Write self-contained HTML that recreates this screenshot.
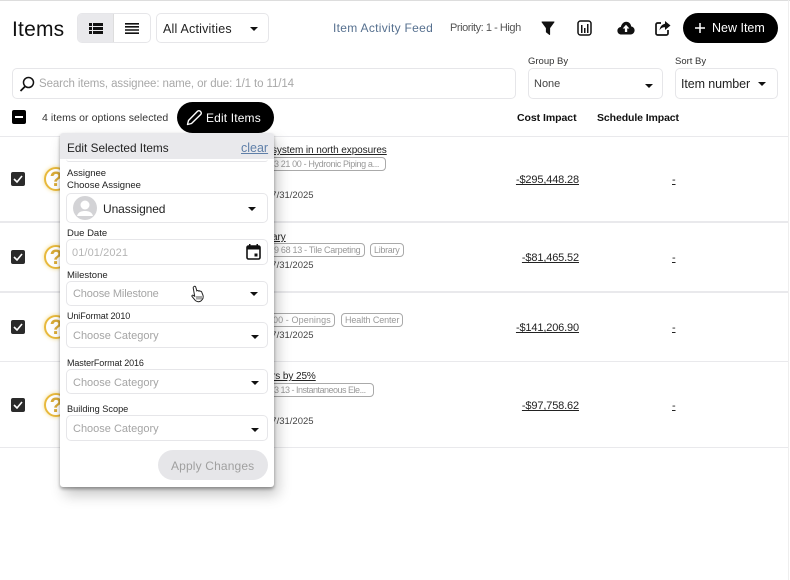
<!DOCTYPE html>
<html><head><meta charset="utf-8">
<style>
html,body{margin:0;padding:0;background:#fff}
#p{position:relative;width:790px;height:580px;overflow:hidden;background:#fff;font-family:"Liberation Sans",sans-serif;color:#111;filter:blur(.25px)}
#p div,#p span.t,#p svg{position:absolute}
.t{position:absolute;white-space:nowrap;line-height:1}
.box{border:1px solid #e6e6e9;border-radius:5px;background:#fff;box-sizing:border-box}
.line{left:0;width:788px;background:#e9e9ec;height:1px}
.cb{left:11px;width:14px;height:14px;background:#2b2b2b;border-radius:2px}
.q{left:44px;width:20px;height:20px;border:2.5px solid #e8b93c;border-radius:50%;box-shadow:0 0 4px #f3dc8e;color:#d9ab38;font-size:21px;font-weight:bold;text-align:center;line-height:21px}
.tag{border:1px solid #aaa;border-radius:4px;height:14px;box-sizing:border-box;background:#fff}
.gr{color:#999;font-size:9px;letter-spacing:-.3px}
.ttl{font-size:10px;text-decoration:underline;color:#222;letter-spacing:-.08px}
.dt{font-size:9.5px;color:#444}
.amt{font-size:11px;text-decoration:underline;letter-spacing:-.15px;color:#222}
.lab{font-size:9.5px;color:#222}
.ph{font-size:11px;color:#a5a5a5}
.arr{width:0;height:0;border-left:4px solid transparent;border-right:4px solid transparent;border-top:4px solid #111}
.fld{left:66px;width:202px;border:1px solid #e6e6e9;border-radius:5px;box-sizing:border-box;background:#fff}
</style></head><body><div id="p">
<div style="left:0;top:0;width:790px;height:1px;background:#ddd"></div>
<div style="left:788px;top:0;width:1px;height:580px;background:#eee"></div>

<span class="t" style="left:12px;top:19px;font-size:21px;letter-spacing:.2px">Items</span>
<div class="box" style="left:77px;top:13px;width:74px;height:30px"></div>
<div style="left:78px;top:14px;width:35px;height:28px;background:#e9e9ec;border-radius:4px 0 0 4px;border-right:1px solid #ddd"></div>
<svg style="left:89px;top:23px" width="14" height="11" viewBox="0 0 14 11"><path d="M0 0h3v3H0zM4 0h10v3H4zM0 4h3v3H0zM4 4h10v3H4zM0 8h3v3H0zM4 8h10v3H4z" fill="#111"/></svg>
<svg style="left:125px;top:23px" width="14" height="11" viewBox="0 0 14 11"><path d="M0 0h14v1.6H0zM0 3h14v1.6H0zM0 6.2h14v1.6H0zM0 9.4h14V11H0z" fill="#111"/></svg>
<div class="box" style="left:156px;top:13px;width:113px;height:30px"></div>
<span class="t" style="left:163px;top:23px;font-size:12.5px;color:#222;letter-spacing:.2px">All Activities</span>
<div class="arr" style="left:250px;top:27px"></div>

<span class="t" style="left:333px;top:22px;font-size:12px;color:#56708f;letter-spacing:.3px">Item Activity Feed</span>
<span class="t" style="left:450px;top:23px;font-size:11px;color:#555;letter-spacing:-.45px">Priority: 1 - High</span>
<svg style="left:541px;top:21px" width="14" height="14" viewBox="0 0 14 14"><path d="M1 1h12L8.6 7v6.5L5.4 11V7z" fill="#111" stroke="#111" stroke-linejoin="round"/></svg>
<svg style="left:577px;top:20px" width="15" height="16" viewBox="0 0 15 16"><rect x="1" y="1" width="13" height="14" rx="2.5" fill="none" stroke="#111" stroke-width="1.5"/><path d="M4 5h1.5v8H4zM7 8h1.5v5H7zM10 4h1.5v9H10z" fill="#111"/></svg>
<svg style="left:617px;top:21px" width="18" height="14" viewBox="0 0 18 14"><path d="M4.5 13.5C2 13.5 .4 11.8 .4 9.7c0-2 1.5-3.5 3.4-3.7C4.600 3 6.600 .8 9.200 .8c2.700 0 4.700 2 5 4.700 1.900.2 3.400 1.800 3.400 3.800 0 2.400-1.800 4.200-4 4.200z" fill="#111"/><path d="M9 3.800l3.400 3.700h-2.200v3.500H7.900V7.500H5.700z" fill="#fff"/></svg>
<svg style="left:655px;top:20px" width="16" height="16" viewBox="0 0 16 16"><path d="M6 3H2.600C1.700 3 1 3.700 1 4.600v8.800c0 .9.700 1.600 1.600 1.600h8.800c.9 0 1.600-.7 1.600-1.600V10" fill="none" stroke="#111" stroke-width="1.700"/><path d="M10 1l5.500 4.500L10 10V7.300C7.500 7.300 5.700 8.200 4.500 10.500 4.800 7 6.600 4.300 10 3.700z" fill="#111"/></svg>
<div style="left:683px;top:13px;width:95px;height:30px;background:#000;border-radius:15px"></div>
<svg style="left:694px;top:22px" width="12" height="12" viewBox="0 0 12 12"><path d="M6 1v10M1 6h10" stroke="#fff" stroke-width="1.500"/></svg>
<span class="t" style="left:712px;top:22px;font-size:12.5px;color:#fff;font-weight:500">New Item</span>

<div class="box" style="left:12px;top:68px;width:504px;height:31px"></div>
<svg style="left:19px;top:76px" width="16" height="16" viewBox="0 0 16 16"><circle cx="9.500" cy="6.500" r="5" fill="none" stroke="#111" stroke-width="1.500"/><path d="M6 10.500L1.500 15" stroke="#111" stroke-width="1.800"/></svg>
<span class="t" style="left:39px;top:79px;font-size:11.5px;color:#a8a8a8;letter-spacing:-.1px">Search items, assignee: name, or due: 1/1 to 11/14</span>

<span class="t" style="left:528px;top:57px;font-size:9.500px;color:#333">Group By</span>
<div class="box" style="left:528px;top:68px;width:135px;height:31px"></div>
<span class="t" style="left:534px;top:79px;font-size:11px;color:#444">None</span>
<div class="arr" style="left:645px;top:84px"></div>
<span class="t" style="left:675px;top:57px;font-size:9.500px;color:#333">Sort By</span>
<div class="box" style="left:675px;top:68px;width:103px;height:31px"></div>
<span class="t" style="left:681px;top:78px;font-size:12.500px;color:#222;letter-spacing:-.1px">Item number</span>
<div class="arr" style="left:758px;top:82px"></div>

<div style="left:12px;top:110px;width:14px;height:14px;background:#000;border-radius:2px"></div>
<div style="left:15px;top:116px;width:8px;height:2px;background:#fff"></div>
<span class="t" style="left:42px;top:113px;font-size:10.500px;color:#333;letter-spacing:.05px">4 items or options selected</span>

<span class="t" style="left:517px;top:113px;font-size:10.500px;font-weight:bold;letter-spacing:-.05px">Cost Impact</span>
<span class="t" style="left:597px;top:113px;font-size:10.500px;font-weight:bold;letter-spacing:-.1px">Schedule Impact</span>

<div class="line" style="top:136px"></div>
<div class="line" style="top:221px;height:2px"></div>
<div class="line" style="top:291px;height:2px"></div>
<div class="line" style="top:361px"></div>
<div class="line" style="top:447px"></div>

<div class="cb" style="top:172px"></div><svg style="left:13px;top:175px" width="10" height="8" viewBox="0 0 10 8"><path d="M1 4l3 3 5-6" fill="none" stroke="#fff" stroke-width="1.600"/></svg>
<div class="cb" style="top:250px"></div><svg style="left:13px;top:253px" width="10" height="8" viewBox="0 0 10 8"><path d="M1 4l3 3 5-6" fill="none" stroke="#fff" stroke-width="1.600"/></svg>
<div class="cb" style="top:320px"></div><svg style="left:13px;top:323px" width="10" height="8" viewBox="0 0 10 8"><path d="M1 4l3 3 5-6" fill="none" stroke="#fff" stroke-width="1.600"/></svg>
<div class="cb" style="top:398px"></div><svg style="left:13px;top:401px" width="10" height="8" viewBox="0 0 10 8"><path d="M1 4l3 3 5-6" fill="none" stroke="#fff" stroke-width="1.600"/></svg>
<div class="q" style="top:167px">?</div>
<div class="q" style="top:245px">?</div>
<div class="q" style="top:315px">?</div>
<div class="q" style="top:393px">?</div>

<!-- row text -->
<span class="t ttl" style="left:272px;top:146px">system in north exposures</span>
<div class="tag" style="left:250px;top:157px;width:136px"></div><span class="t gr" style="left:274px;top:160px;letter-spacing:-.37px">3 21 00 - Hydronic Piping a...</span>
<span class="t dt" style="left:266px;top:191px">07/31/2025</span>

<span class="t ttl" style="left:272px;top:233px">ary</span>
<div class="tag" style="left:250px;top:243px;width:115px"></div><span class="t gr" style="left:274px;top:246px">9 68 13 - Tile Carpeting</span>
<div class="tag" style="left:370px;top:243px;width:34px"></div><span class="t gr" style="left:374px;top:246px">Library</span>
<span class="t dt" style="left:266px;top:261px">07/31/2025</span>

<div class="tag" style="left:250px;top:313px;width:85px"></div><span class="t gr" style="left:273px;top:316px;letter-spacing:.1px">00 - Openings</span>
<div class="tag" style="left:341px;top:313px;width:62px"></div><span class="t gr" style="left:345px;top:316px;letter-spacing:-.1px">Health Center</span>
<span class="t dt" style="left:266px;top:331px">07/31/2025</span>

<span class="t ttl" style="left:272px;top:372px">rs by 25%</span>
<div class="tag" style="left:250px;top:383px;width:124px"></div><span class="t gr" style="left:274px;top:386px;letter-spacing:-.5px">3 13 - Instantaneous Ele...</span>
<span class="t dt" style="left:266px;top:417px">07/31/2025</span>

<span class="t amt" style="right:211px;top:175px">-$295,448.28</span>
<span class="t amt" style="right:211px;top:253px">-$81,465.52</span>
<span class="t amt" style="right:211px;top:323px">-$141,206.90</span>
<span class="t amt" style="right:211px;top:401px">-$97,758.62</span>
<span class="t amt" style="left:672px;top:175px">-</span>
<span class="t amt" style="left:672px;top:253px">-</span>
<span class="t amt" style="left:672px;top:323px">-</span>
<span class="t amt" style="left:672px;top:401px">-</span>

<!-- popup -->
<div style="left:60px;top:133px;width:214px;height:354px;background:#fff;border-radius:3px;box-shadow:0 2px 3px rgba(0,0,0,.35),4px 8px 14px rgba(0,0,0,.22)"></div>
<div style="left:60px;top:133px;width:214px;height:26px;background:#e9e9ec;border-radius:3px 3px 0 0"></div>
<span class="t" style="left:67px;top:143px;font-size:11.8px;color:#222">Edit Selected Items</span>
<span class="t" style="left:241px;top:142px;font-size:12.500px;color:#5f7fa8;text-decoration:underline">clear</span>
<div style="left:66px;top:159px;width:202px;height:3px;border-bottom:1px solid #e6e6e9;border-radius:0 0 5px 5px;box-sizing:border-box"></div>
<span class="t lab" style="left:67px;top:169px">Assignee</span>
<span class="t lab" style="left:67px;top:181px">Choose Assignee</span>
<div class="fld" style="top:193px;height:30px"></div>
<div style="left:73px;top:196px;width:24px;height:24px;border-radius:50%;background:#d3d3d6;overflow:hidden"></div>
<svg style="left:73px;top:196px" width="24" height="24" viewBox="0 0 24 24"><circle cx="12" cy="9" r="4.500" fill="#fff"/><path d="M4 20c1-4 4.500-5 8-5s7 1 8 5z" fill="#fff"/></svg>
<span class="t" style="left:103px;top:203px;font-size:12px;color:#222;letter-spacing:-.1px">Unassigned</span>
<div class="arr" style="left:248px;top:207px"></div>

<span class="t lab" style="left:67px;top:229px">Due Date</span>
<div class="fld" style="top:239px;height:26px"></div>
<span class="t ph" style="left:72px;top:248px;color:#b5b5b5;letter-spacing:.1px">01/01/2021</span>
<svg style="left:246px;top:244px" width="15" height="16" viewBox="0 0 15 16"><path d="M3 0v2h1.500V0zM10.500 0v2H12V0z" fill="#111"/><rect x="1" y="2" width="13" height="13" rx="1.500" fill="none" stroke="#111" stroke-width="1.600"/><rect x="1" y="2" width="13" height="3.500" fill="#111"/><rect x="8.500" y="9.500" width="3" height="3" fill="#111"/></svg>

<span class="t lab" style="left:67px;top:271px">Milestone</span>
<div class="fld" style="top:281px;height:25px"></div>
<span class="t ph" style="left:73px;top:289px;letter-spacing:-.15px">Choose Milestone</span>
<div class="arr" style="left:250px;top:292px"></div>
<svg style="left:190px;top:285px" width="16" height="18" viewBox="0 0 16 18"><path d="M4 1.500c.8-.6 1.600 0 1.800.8l1 3.500c.5-.5 1.300-.4 1.600.2.500-.4 1.300-.3 1.600.3.500-.3 1.300-.1 1.600.5l1.400 3.500c.6 2-.2 4-1.800 5.500-1.800 1.500-4.500 1.200-6-.5L2 11.500c-.5-.7.300-1.700 1.200-1.200l1.500 1L3.200 2.800c-.1-.5.300-1 .8-1.300z" fill="#fff" stroke="#222" stroke-width="1"/><path d="M7 11v3.500M9 11v3.500M11 11v3.500" stroke="#222" stroke-width=".8"/></svg>

<span class="t lab" style="left:67px;top:312px;font-size:9px;letter-spacing:-.1px">UniFormat 2010</span>
<div class="fld" style="top:322px;height:26px"></div>
<span class="t ph" style="left:73px;top:331px">Choose Category</span>
<div class="arr" style="left:251px;top:335px"></div>

<span class="t lab" style="left:67px;top:359px;font-size:9px;letter-spacing:-.1px">MasterFormat 2016</span>
<div class="fld" style="top:369px;height:25px"></div>
<span class="t ph" style="left:73px;top:378px">Choose Category</span>
<div class="arr" style="left:251px;top:381px"></div>

<span class="t lab" style="left:67px;top:405px;font-size:9.2px">Building Scope</span>
<div class="fld" style="top:415px;height:26px"></div>
<span class="t ph" style="left:73px;top:424px">Choose Category</span>
<div class="arr" style="left:251px;top:428px"></div>

<div style="left:158px;top:450px;width:110px;height:30px;background:#e6e6e9;border-radius:15px"></div>
<span class="t" style="left:171px;top:460px;font-size:12px;color:#a0a0a0;letter-spacing:.15px">Apply Changes</span>

<!-- Edit Items button -->
<div style="left:177px;top:102px;width:97px;height:31px;background:#000;border-radius:16px"></div>
<svg style="left:186px;top:109px" width="17" height="17" viewBox="0 0 17 17"><path d="M1.500 15.500l1-4L11.500 2.300c.8-.8 2-.8 2.800 0l.4.400c.8.800.8 2 0 2.800L5.500 14.500z" fill="none" stroke="#fff" stroke-width="1.400" stroke-linejoin="round"/></svg>
<span class="t" style="left:206px;top:112px;font-size:12px;color:#fff;letter-spacing:.15px">Edit Items</span>
</div></body></html>
